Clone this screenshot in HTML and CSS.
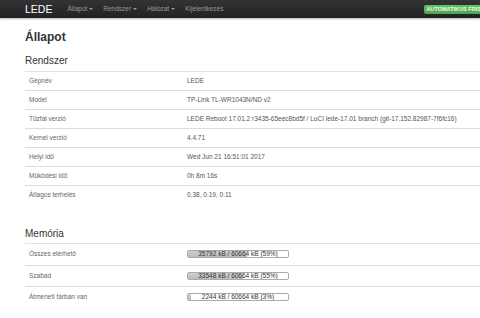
FILE: index.html
```html
<!DOCTYPE html>
<html lang="hu">
<head>
<meta charset="utf-8">
<title>LEDE - Állapot</title>
<link rel="stylesheet" href="styles.css">
</head>
<body>
<header class="navbar">
  <div class="nav-inner">
    <span class="brand">LEDE</span>
    <ul class="menu">
      <li class="menu-item">Állapot <span class="caret"></span></li>
      <li class="menu-item">Rendszer <span class="caret"></span></li>
      <li class="menu-item">Hálózat <span class="caret"></span></li>
      <li class="menu-item">Kijelentkezés</li>
    </ul>
    <span class="badge">AUTOMATIKUS FRISSÍTÉS BE</span>
  </div>
</header>
<main class="content">
  <h2 class="page-title">Állapot</h2>

  <h3 class="section-title">Rendszer</h3>
  <div class="info-table">
    <div class="row"><div class="label">Gépnév</div><div class="value">LEDE</div></div>
    <div class="row"><div class="label">Model</div><div class="value">TP-Link TL-WR1043N/ND v2</div></div>
    <div class="row"><div class="label">Tűzfal verzió</div><div class="value">LEDE Reboot 17.01.2 r3435-65eec8bd5f / LuCI lede-17.01 branch (git-17.152.82987-7f6fc16)</div></div>
    <div class="row"><div class="label">Kernel verzió</div><div class="value">4.4.71</div></div>
    <div class="row"><div class="label">Helyi idő</div><div class="value">Wed Jun 21 16:51:01 2017</div></div>
    <div class="row"><div class="label">Működési idő</div><div class="value">0h 8m 16s</div></div>
    <div class="row"><div class="label">Átlagos terhelés</div><div class="value">0.38, 0.19, 0.11</div></div>
  </div>

  <h3 class="section-title mem-title">Memória</h3>
  <div class="info-table mem-table">
    <div class="row"><div class="label">Összes elérhető</div><div class="value"><div class="bar"><div class="fill" style="width:59%"></div><span class="bar-text">35792 kB / 60664 kB (59%)</span></div></div></div>
    <div class="row"><div class="label">Szabad</div><div class="value"><div class="bar"><div class="fill" style="width:55%"></div><span class="bar-text">33548 kB / 60664 kB (55%)</span></div></div></div>
    <div class="row"><div class="label">Átmeneti tárban van</div><div class="value"><div class="bar"><div class="fill" style="width:3%"></div><span class="bar-text">2244 kB / 60664 kB (3%)</span></div></div></div>
  </div>
</main>
</body>
</html>
```
FILE: styles.css
```css
html, body {
  margin: 0;
  padding: 0;
  background: #fff;
  font-family: "Liberation Sans", Arial, sans-serif;
  color: #333;
}

.navbar {
  height: 18px;
  background: linear-gradient(#333, #222);
  box-shadow: 0 1px 2px rgba(0, 0, 0, 0.3);
  overflow: hidden;
}

.nav-inner {
  display: flex;
  align-items: center;
  height: 18px;
  padding-left: 25px;
  white-space: nowrap;
}

.brand {
  color: #fff;
  font-size: 10.5px;
  line-height: 18px;
}

.menu {
  display: flex;
  list-style: none;
  margin: 0 0 0 15px;
  padding: 0;
  gap: 10px;
}

.menu-item {
  color: #999;
  font-size: 6.5px;
  line-height: 18px;
  display: flex;
  align-items: center;
  gap: 2px;
}

.caret {
  display: inline-block;
  width: 0;
  height: 0;
  border-left: 2px solid transparent;
  border-right: 2px solid transparent;
  border-top: 2px solid #999;
}

.badge {
  flex-shrink: 0;
  margin-left: 200px;
  background: linear-gradient(#62c462, #51a351);
  color: #e8ffe8;
  font-size: 5.5px;
  font-weight: bold;
  line-height: 9px;
  padding: 0 3px;
  border-radius: 2px;
}

.content {
  padding: 11.5px 0 0 25px;
}

.page-title {
  margin: 0;
  font-size: 12px;
  line-height: 14px;
  font-weight: bold;
  color: #333;
}

.section-title {
  margin: 11.5px 0 4px;
  font-size: 10px;
  line-height: 12px;
  font-weight: normal;
  color: #333;
}

.mem-title {
  margin: 24px 0 3px;
}

.row {
  display: grid;
  grid-template-columns: 158px 1fr;
  align-items: center;
  height: 19px;
  box-sizing: border-box;
  border-top: 1px solid #ddd;
  font-size: 6.5px;
  line-height: 8px;
}

.info-table .row:first-child {
  border-top-color: #e2e2e2;
}

.mem-table .row {
  height: 21.5px;
}

.label {
  padding: 0 4px;
  color: #666;
}

.value {
  padding: 0 4px;
  color: #555;
  white-space: nowrap;
}

.bar {
  position: relative;
  width: 102px;
  height: 8px;
  box-sizing: border-box;
  border: 1px solid #aaa;
  border-radius: 2px;
  background: #fff;
  overflow: hidden;
}

.fill {
  height: 100%;
  background: linear-gradient(#d0d0d0, #bcbcbc);
}

.bar-text {
  position: absolute;
  inset: 0;
  text-align: center;
  font-size: 6.5px;
  line-height: 6px;
  color: #333;
}
```
